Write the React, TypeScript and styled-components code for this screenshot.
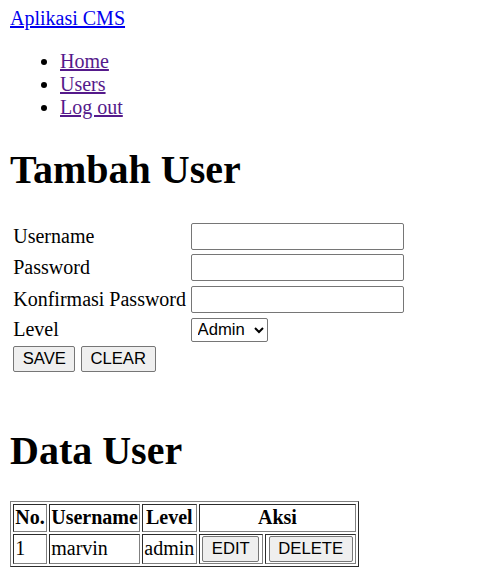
import React from 'react';
import styled, { createGlobalStyle } from 'styled-components';

const GlobalStyle = createGlobalStyle`
  body {
    margin: 7px 10px 10px;
    font-family: "Liberation Serif", "Times New Roman", serif;
    font-size: 20px;
    color: #000;
    background: #fff;
  }
`;

const BrandLink = styled.a`
  color: #0000ee;
  text-decoration: underline;
`;

const NavList = styled.ul`
  margin: 20px 0;
  padding-left: 50px;
  list-style: disc;
`;

const NavLink = styled.a`
  color: #551a8b;
  text-decoration: underline;
`;

const Heading = styled.h1`
  font-size: 40px;
  font-weight: bold;
  margin: 26.8px 0;
`;

const FormTable = styled.table`
  border-spacing: 2.5px;
  td {
    padding: 1.25px;
  }
`;

const TextInput = styled.input`
  font-family: "Liberation Sans", Arial, sans-serif;
  font-size: 16.67px;
  width: 213px;
  height: 27px;
  padding: 1px 2px;
  border: 1px solid #767676;
  border-radius: 2px;
  box-sizing: border-box;
  vertical-align: middle;
`;

const Select = styled.select`
  font-family: "Liberation Sans", Arial, sans-serif;
  font-size: 16.67px;
  color: #000;
  border: 1px solid #767676;
  border-radius: 2px;
  background: #fff;
  padding: 0 0 0 2px;
  width: 77px;
  height: 24px;
  box-sizing: border-box;
`;

const Button = styled.button`
  font-family: "Liberation Sans", Arial, sans-serif;
  font-size: 16.67px;
  background: #efefef;
  border: 1px solid #767676;
  border-radius: 2px;
  padding: 0 8.5px;
  height: 26px;
  margin-right: 5.5px;
  color: #000;
`;

const Spacer = styled.div`
  height: 25px;
`;

const DataTable = styled.table`
  border: 1px outset grey;
  border-spacing: 2.5px;
  th,
  td {
    border: 1px inset grey;
    padding: 1.25px;
  }
  th {
    font-weight: bold;
  }
`;

const CellButton = styled(Button)`
  margin: 0 1.5px;
`;

const users = [{ no: 1, username: 'marvin', level: 'admin' }];

export default function App() {
  return (
    <>
      <GlobalStyle />
      <BrandLink href="#">Aplikasi CMS</BrandLink>
      <NavList>
        <li><NavLink href="#">Home</NavLink></li>
        <li><NavLink href="#">Users</NavLink></li>
        <li><NavLink href="#">Log out</NavLink></li>
      </NavList>

      <Heading>Tambah User</Heading>
      <form>
        <FormTable>
          <tbody>
            <tr>
              <td>Username</td>
              <td><TextInput type="text" /></td>
            </tr>
            <tr>
              <td>Password</td>
              <td><TextInput type="password" /></td>
            </tr>
            <tr>
              <td>Konfirmasi Password</td>
              <td><TextInput type="password" /></td>
            </tr>
            <tr>
              <td>Level</td>
              <td>
                <Select defaultValue="admin">
                  <option value="admin">Admin</option>
                  <option value="user">User</option>
                </Select>
              </td>
            </tr>
            <tr>
              <td colSpan={2}>
                <Button type="button">SAVE</Button>
                <Button type="reset">CLEAR</Button>
              </td>
            </tr>
          </tbody>
        </FormTable>
      </form>
      <Spacer />

      <Heading>Data User</Heading>
      <DataTable>
        <thead>
          <tr>
            <th>No.</th>
            <th>Username</th>
            <th>Level</th>
            <th colSpan={2}>Aksi</th>
          </tr>
        </thead>
        <tbody>
          {users.map((u) => (
            <tr key={u.no}>
              <td>{u.no}</td>
              <td>{u.username}</td>
              <td>{u.level}</td>
              <td><CellButton type="button">EDIT</CellButton></td>
              <td><CellButton type="button">DELETE</CellButton></td>
            </tr>
          ))}
        </tbody>
      </DataTable>
    </>
  );
}
